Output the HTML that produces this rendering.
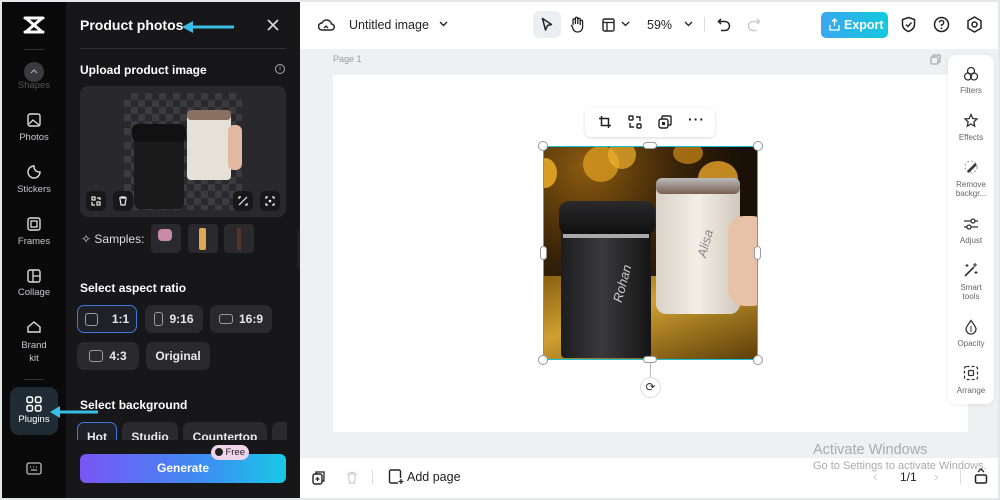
<!DOCTYPE html>
<html><head><meta charset="utf-8"><style>
*{box-sizing:border-box;margin:0;padding:0}
body{width:1000px;height:500px;overflow:hidden;background:#e6e7ea;font-family:"Liberation Sans",sans-serif;position:relative}
.a{position:absolute}
.rail{left:2px;top:2px;width:64px;height:496px;background:#0a0a0b}
.panel{left:66px;top:2px;width:234px;height:496px;background:#17171a}
.rl{color:#c8c8cc;font-size:9.5px;text-align:center;width:64px;left:2px}
.w{color:#fff}
.btn{background:#2a2a2e;border-radius:7px;color:#e8e8ea;font-size:12px;font-weight:bold;display:flex;align-items:center;justify-content:center;gap:6px}
.sq{border:1.5px solid #9a9aa0;border-radius:3px;display:inline-block}
.ri{left:948px;width:46px;text-align:center;color:#666;font-size:8px;line-height:9px}
svg{position:absolute}
</style></head><body>
<div class="a rail"></div>
<div class="a panel"></div>
<!-- logo -->
<svg style="left:22px;top:15px" width="24" height="20" viewBox="0 0 24 20"><path d="M3 3h18M3 17h18M5 4l14 12M19 4L5 16" stroke="#fff" stroke-width="3" fill="none" stroke-linecap="round"/></svg>
<div class="a" style="left:24px;top:49px;width:20px;height:1px;background:#333"></div>
<div class="a" style="left:24px;top:62px;width:20px;height:20px;border-radius:50%;background:#3a3a3e"></div>
<svg style="left:30px;top:68px" width="8" height="6"><path d="M1 5l3-3 3 3" stroke="#aaa" fill="none" stroke-width="1.2"/></svg>
<div class="a rl" style="top:80px;color:#555">Shapes</div>
<svg style="left:27px;top:113px" width="14" height="14"><rect x="1" y="1" width="12" height="12" rx="2" stroke="#ddd" fill="none" stroke-width="1.4"/><path d="M2 11l4-4 6 5" stroke="#ddd" fill="none" stroke-width="1.3"/></svg>
<div class="a rl" style="top:132px">Photos</div>
<svg style="left:27px;top:165px" width="14" height="14"><path d="M7 1a6 6 0 1 0 6 6c-4 0-6-2-6-6z" stroke="#ddd" fill="none" stroke-width="1.4"/></svg>
<div class="a rl" style="top:184px">Stickers</div>
<svg style="left:27px;top:217px" width="14" height="14"><rect x="1" y="1" width="12" height="12" rx="2" stroke="#ddd" fill="none" stroke-width="1.4"/><rect x="4" y="4" width="6" height="6" stroke="#ddd" fill="none" stroke-width="1.3"/></svg>
<div class="a rl" style="top:236px">Frames</div>
<svg style="left:27px;top:269px" width="14" height="14"><rect x="1" y="1" width="12" height="12" rx="2" stroke="#ddd" fill="none" stroke-width="1.4"/><path d="M6 1v12M6 7h7" stroke="#ddd" stroke-width="1.3"/></svg>
<div class="a rl" style="top:287px">Collage</div>
<svg style="left:26px;top:320px" width="16" height="14"><path d="M2 12h12V7L8 2 2 7z" stroke="#ddd" fill="none" stroke-width="1.4"/></svg>
<div class="a rl" style="top:339px;line-height:13px">Brand<br>kit</div>
<div class="a" style="left:24px;top:379px;width:20px;height:1px;background:#333"></div>
<div class="a" style="left:10px;top:387px;width:48px;height:48px;border-radius:9px;background:#1f2b35"></div>
<svg style="left:26px;top:396px" width="16" height="16"><g stroke="#fff" fill="none" stroke-width="1.5"><rect x="1" y="1" width="5.5" height="5.5" rx="1.5"/><rect x="9.5" y="1" width="5.5" height="5.5" rx="1.5"/><rect x="1" y="9.5" width="5.5" height="5.5" rx="1.5"/><rect x="9.5" y="9.5" width="5.5" height="5.5" rx="1.5"/></g></svg>
<div class="a rl w" style="top:414px;color:#fff">Plugins</div>
<svg style="left:48px;top:404px" width="52" height="16"><path d="M50 8H10" stroke="#3bbde8" stroke-width="3"/><path d="M2 8l10-6v12z" fill="#3bbde8"/></svg>
<svg style="left:26px;top:462px" width="16" height="14"><rect x="1" y="1" width="14" height="11" rx="2" stroke="#bbb" fill="none" stroke-width="1.3"/><path d="M4 5h1M7 5h1M10 5h1M5 8h6" stroke="#bbb" stroke-width="1.3"/></svg>

<!-- panel -->
<div class="a w" style="left:80px;top:17px;font-size:14px;font-weight:bold">Product photos</div>
<svg style="left:180px;top:19px" width="56" height="16"><path d="M54 8H12" stroke="#3bbde8" stroke-width="3"/><path d="M2 8l11-6v12z" fill="#3bbde8"/></svg>
<svg style="left:267px;top:19px" width="12" height="12"><path d="M1 1l10 10M11 1L1 11" stroke="#ddd" stroke-width="1.6"/></svg>
<div class="a" style="left:80px;top:48px;width:206px;height:1px;background:#2e2e33"></div>
<div class="a w" style="left:80px;top:63px;font-size:12px;font-weight:bold">Upload product image</div>
<div class="a" style="left:275px;top:64px;width:10px;height:10px;border-radius:50%;border:1px solid #aaa;color:#aaa;font-size:7px;text-align:center;line-height:8px">i</div>
<div class="a" style="left:80px;top:86px;width:206px;height:131px;border-radius:8px;background:#29292d"></div>
<div class="a" style="left:124px;top:93px;width:118px;height:117px;background-color:#2a2a2e;background-image:linear-gradient(45deg,#3b3b40 25%,transparent 25%,transparent 75%,#3b3b40 75%),linear-gradient(45deg,#3b3b40 25%,transparent 25%,transparent 75%,#3b3b40 75%);background-size:14px 14px;background-position:0 0,7px 7px"></div>
<div class="a" style="left:134px;top:125px;width:50px;height:84px;background:#1a1a1a;border-radius:8px 8px 6px 6px"></div>
<div class="a" style="left:132px;top:124px;width:54px;height:18px;background:#111;border-radius:6px"></div>
<div class="a" style="left:187px;top:112px;width:44px;height:68px;background:#e6e1d8;border-radius:4px"></div>
<div class="a" style="left:187px;top:110px;width:44px;height:10px;background:#8a7060;border-radius:4px"></div>
<div class="a" style="left:228px;top:125px;width:14px;height:45px;background:#e2b8a0;border-radius:6px"></div>
<div class="a" style="left:86px;top:191px;width:20px;height:20px;background:#18181b;border-radius:5px"></div>
<div class="a" style="left:113px;top:191px;width:20px;height:20px;background:#18181b;border-radius:5px"></div>
<div class="a" style="left:233px;top:191px;width:20px;height:20px;background:#18181b;border-radius:5px"></div>
<div class="a" style="left:260px;top:191px;width:20px;height:20px;background:#18181b;border-radius:5px"></div>
<svg style="left:91px;top:196px" width="10" height="10"><g stroke="#eee" fill="none" stroke-width="1.2"><rect x="1" y="1" width="3" height="3"/><rect x="6" y="6" width="3" height="3"/><path d="M6 2h3v2M1 6v3h3"/></g></svg>
<svg style="left:118px;top:196px" width="10" height="10"><path d="M1 2h8M3 2V1h4v1M2 3l1 6h4l1-6" stroke="#eee" fill="none" stroke-width="1.2"/></svg>
<svg style="left:238px;top:196px" width="10" height="10"><path d="M1 9l8-8M1 3V1h2M9 7v2H7" stroke="#eee" fill="none" stroke-width="1.2"/></svg>
<svg style="left:265px;top:196px" width="10" height="10"><path d="M1 3V1h2M7 1h2v2M9 7v2H7M3 9H1V7" stroke="#eee" fill="none" stroke-width="1.2"/><circle cx="5" cy="5" r="1.3" fill="#eee"/></svg>
<div class="a" style="left:81px;top:232px;color:#ccc;font-size:12px">✧ <span style="color:#ddd">Samples:</span></div>
<div class="a" style="left:151px;top:224px;width:30px;height:29px;background:#2a2a2e;border-radius:4px"></div>
<div class="a" style="left:158px;top:229px;width:14px;height:12px;background:#c98aa8;border-radius:4px"></div>
<div class="a" style="left:188px;top:224px;width:30px;height:29px;background:#2a2a2e;border-radius:4px"></div>
<div class="a" style="left:199px;top:228px;width:7px;height:22px;background:#d9a955;border-radius:2px"></div>
<div class="a" style="left:224px;top:224px;width:30px;height:29px;background:#2a2a2e;border-radius:4px"></div>
<div class="a" style="left:237px;top:228px;width:4px;height:22px;background:#5a3328"></div>
<div class="a w" style="left:80px;top:281px;font-size:12px;font-weight:bold">Select aspect ratio</div>
<div class="a btn" style="left:77px;top:305px;width:60px;height:28px;border:1.5px solid #3d78d8;background:#202028"><span class="sq" style="width:13px;height:13px"></span><span style="margin-left:8px">1:1</span></div>
<div class="a btn" style="left:145px;top:305px;width:58px;height:28px"><span class="sq" style="width:9px;height:14px"></span>9:16</div>
<div class="a btn" style="left:210px;top:305px;width:62px;height:28px"><span class="sq" style="width:14px;height:10px"></span>16:9</div>
<div class="a btn" style="left:77px;top:342px;width:62px;height:28px"><span class="sq" style="width:14px;height:12px"></span>4:3</div>
<div class="a btn" style="left:146px;top:342px;width:64px;height:28px">Original</div>
<div class="a w" style="left:80px;top:398px;font-size:12px;font-weight:bold">Select background</div>
<div class="a" style="left:77px;top:420px;width:210px;height:20px;overflow:hidden">
<div class="a btn" style="left:0;top:2px;width:40px;height:28px;border:1.5px solid #3d78d8;background:#202028;align-items:flex-start;padding-top:7px">Hot</div>
<div class="a btn" style="left:45px;top:2px;width:56px;height:28px;align-items:flex-start;padding-top:8px">Studio</div>
<div class="a btn" style="left:106px;top:2px;width:84px;height:28px;align-items:flex-start;padding-top:8px">Countertop</div>
<div class="a btn" style="left:195px;top:2px;width:40px;height:28px"></div>
</div>
<div class="a" style="left:80px;top:454px;width:206px;height:29px;border-radius:6px;background:linear-gradient(90deg,#7a55f5,#3d8ef2 60%,#18c8e6);color:#fff;font-size:12px;font-weight:bold;text-align:center;line-height:29px">Generate</div>
<div class="a" style="left:211px;top:445px;width:38px;height:15px;border-radius:8px;background:#f0d4ec;color:#222;font-size:9.5px;line-height:15px;text-align:right;padding-right:4px"><span style="position:absolute;left:4px;top:3px;width:8px;height:8px;border-radius:50%;background:#222"></span>Free</div>
<div class="a" style="left:297px;top:230px;width:6px;height:40px;background:#222;border-radius:3px"></div>

<!-- topbar -->
<div class="a" style="left:300px;top:2px;width:698px;height:47px;background:#fff"></div>
<svg style="left:318px;top:17px" width="17" height="15"><path d="M4 13a3.5 3.5 0 0 1 0-7 5 5 0 0 1 9.5 1A3 3 0 0 1 13 13z" stroke="#222" fill="none" stroke-width="1.5"/><path d="M6 11l2-2 2 2" stroke="#222" fill="none" stroke-width="1.3"/></svg>
<div class="a" style="left:349px;top:18px;font-size:12.5px;color:#222">Untitled image</div>
<svg style="left:439px;top:21px" width="9" height="6"><path d="M1 1l3.5 3.5L8 1" stroke="#222" fill="none" stroke-width="1.4"/></svg>
<div class="a" style="left:533px;top:11px;width:28px;height:27px;border-radius:6px;background:#eceef1"></div>
<svg style="left:541px;top:17px" width="12" height="15"><path d="M1.5 1.5l9 6-4 1-2 4.5z" stroke="#222" fill="none" stroke-width="1.5" stroke-linejoin="round"/></svg>
<svg style="left:569px;top:16px" width="15" height="17"><path d="M4 9V4a1.2 1.2 0 0 1 2.4 0v4V2.5a1.2 1.2 0 0 1 2.4 0V8 3.5a1.2 1.2 0 0 1 2.4 0V9 5.5a1.2 1.2 0 0 1 2.4 0V11a5 5 0 0 1-10 0L2 9" stroke="#222" fill="none" stroke-width="1.3"/></svg>
<svg style="left:602px;top:18px" width="13" height="14"><rect x="1" y="1" width="11" height="12" rx="1.5" stroke="#222" fill="none" stroke-width="1.4"/><path d="M1 4.5h11M5 4.5V13" stroke="#222" stroke-width="1.3"/></svg>
<svg style="left:621px;top:21px" width="9" height="6"><path d="M1 1l3.5 3.5L8 1" stroke="#222" fill="none" stroke-width="1.3"/></svg>
<div class="a" style="left:647px;top:18px;font-size:12.5px;color:#222">59%</div>
<svg style="left:684px;top:21px" width="9" height="6"><path d="M1 1l3.5 3.5L8 1" stroke="#222" fill="none" stroke-width="1.3"/></svg>
<div class="a" style="left:704px;top:17px;width:1px;height:15px;background:#ddd"></div>
<svg style="left:717px;top:17px" width="14" height="15"><path d="M4 2L1.5 4.5 4 7M1.5 4.5H8a4.5 4.5 0 0 1 0 9H4" stroke="#222" fill="none" stroke-width="1.5"/></svg>
<svg style="left:747px;top:17px" width="14" height="15"><path d="M10 2l2.5 2.5L10 7M12.5 4.5H6a4.5 4.5 0 0 0 0 9h4" stroke="#ccc" fill="none" stroke-width="1.5"/></svg>
<div class="a" style="left:821px;top:12px;width:67px;height:26px;border-radius:5px;background:linear-gradient(90deg,#3aa7f0,#12c9dc);color:#fff;font-size:12.5px;font-weight:bold;line-height:26px;padding-left:23px">Export</div>
<svg style="left:829px;top:18px" width="11" height="13"><path d="M5.5 8V1M3 3.5l2.5-2.5L8 3.5M1 7v5h9V7" stroke="#fff" fill="none" stroke-width="1.3"/></svg>
<svg style="left:901px;top:16px" width="15" height="17"><path d="M7.5 1.5l6 2v5c0 3.5-3 6-6 7-3-1-6-3.5-6-7v-5z" stroke="#222" fill="none" stroke-width="1.5"/><path d="M5 8.5l2 2 3.5-4" stroke="#222" fill="none" stroke-width="1.4"/></svg>
<svg style="left:933px;top:16px" width="17" height="17"><circle cx="8.5" cy="8.5" r="7" stroke="#222" fill="none" stroke-width="1.5"/><path d="M6.3 6.5a2.2 2.2 0 1 1 2.2 2.3V10" stroke="#222" fill="none" stroke-width="1.4"/><circle cx="8.5" cy="12.3" r=".9" fill="#222"/></svg>
<svg style="left:966px;top:16px" width="17" height="17"><path d="M8.5 1l6.5 3.75v7.5L8.5 16 2 12.25v-7.5z" stroke="#222" fill="none" stroke-width="1.5"/><circle cx="8.5" cy="8.5" r="2.5" stroke="#222" fill="none" stroke-width="1.5"/></svg>

<!-- canvas -->
<div class="a" style="left:300px;top:49px;width:698px;height:409px;background:#eef0f3"></div>
<div class="a" style="left:333px;top:54px;font-size:9px;color:#999">Page 1</div>
<svg style="left:930px;top:54px" width="11" height="11"><rect x="1" y="3" width="7" height="7" rx="1" stroke="#999" fill="none"/><path d="M3 3V1h7v7H8" stroke="#999" fill="none"/></svg>
<div class="a" style="left:333px;top:75px;width:635px;height:357px;background:#fff"></div>
<!-- photo -->
<div class="a" style="left:543px;top:146px;width:215px;height:214px;overflow:hidden;background:radial-gradient(circle at 20% 10%,#8a5a10 0,#3a2408 35%,#1a1006 60%);">
<div class="a" style="left:40px;top:0;width:36px;height:36px;border-radius:50%;background:#d99a20;opacity:.8"></div>
<div class="a" style="left:65px;top:-5px;width:28px;height:28px;border-radius:50%;background:#f0b030;opacity:.7"></div>
<div class="a" style="left:-10px;top:12px;width:24px;height:30px;border-radius:50%;background:#f4b428;opacity:.8"></div>
<div class="a" style="left:155px;top:15px;width:40px;height:35px;border-radius:50%;background:#e9a52a;opacity:.8"></div>
<div class="a" style="left:130px;top:-4px;width:30px;height:22px;border-radius:50%;background:#d08a18;opacity:.7"></div>
<div class="a" style="left:0;top:130px;width:215px;height:84px;background:linear-gradient(160deg,#8a6010,#d0a030 40%,#5a3c08)"></div>
<div class="a" style="left:18px;top:62px;width:90px;height:150px;background:linear-gradient(90deg,#1d1d1f,#3a3a3c 45%,#151516);border-radius:8px 8px 4px 4px"></div>
<div class="a" style="left:16px;top:55px;width:96px;height:34px;background:linear-gradient(#2a2a2c,#0f0f10);border-radius:10px"></div>
<div class="a" style="left:20px;top:88px;width:86px;height:4px;background:#aaa"></div>
<div class="a" style="left:60px;top:130px;font-size:13px;color:#ccc;font-style:italic;transform:rotate(-75deg)">Rohan</div>
<div class="a" style="left:113px;top:38px;width:84px;height:130px;background:linear-gradient(90deg,#d8d2c8,#f2eee6 50%,#d0c8bc);border-radius:4px 4px 10px 10px"></div>
<div class="a" style="left:113px;top:32px;width:84px;height:16px;background:linear-gradient(#bbb,#7a6050);border-radius:6px"></div>
<div class="a" style="left:148px;top:90px;font-size:13px;color:#888;font-style:italic;transform:rotate(-75deg)">Alisa</div>
<div class="a" style="left:185px;top:70px;width:40px;height:90px;background:#e8c2a8;border-radius:16px"></div>
</div>
<div class="a" style="left:543px;top:146px;width:215px;height:214px;border:1.5px solid #14c2d8"></div>
<div class="a" style="left:538px;top:141px;width:10px;height:10px;border-radius:50%;background:#fff;border:1px solid #999"></div>
<div class="a" style="left:753px;top:141px;width:10px;height:10px;border-radius:50%;background:#fff;border:1px solid #999"></div>
<div class="a" style="left:538px;top:355px;width:10px;height:10px;border-radius:50%;background:#fff;border:1px solid #999"></div>
<div class="a" style="left:753px;top:355px;width:10px;height:10px;border-radius:50%;background:#fff;border:1px solid #999"></div>
<div class="a" style="left:643px;top:142px;width:14px;height:7px;border-radius:4px;background:#fff;border:1px solid #999"></div>
<div class="a" style="left:643px;top:356px;width:14px;height:7px;border-radius:4px;background:#fff;border:1px solid #999"></div>
<div class="a" style="left:540px;top:246px;width:7px;height:14px;border-radius:4px;background:#fff;border:1px solid #999"></div>
<div class="a" style="left:754px;top:246px;width:7px;height:14px;border-radius:4px;background:#fff;border:1px solid #999"></div>
<div class="a" style="left:650px;top:363px;width:1px;height:14px;background:#bbb"></div>
<div class="a" style="left:640px;top:377px;width:21px;height:21px;border-radius:50%;background:#fff;border:1px solid #ddd;text-align:center;font-size:12px;line-height:19px;color:#333">⟳</div>
<div class="a" style="left:585px;top:108px;width:130px;height:29px;border-radius:6px;background:#fff;box-shadow:0 1px 3px rgba(0,0,0,.15)"></div>
<svg style="left:598px;top:115px" width="14" height="14"><path d="M3.5 1v9.5H13M1 3.5h9.5V13" stroke="#222" fill="none" stroke-width="1.5"/></svg>
<svg style="left:628px;top:115px" width="14" height="14"><g stroke="#222" fill="none" stroke-width="1.4"><rect x="1" y="1" width="4" height="4" rx="1"/><rect x="9" y="9" width="4" height="4" rx="1"/><path d="M8 2h4v4M2 8v4h4"/></g></svg>
<svg style="left:658px;top:115px" width="14" height="14"><rect x="1" y="4" width="9" height="9" rx="2" stroke="#222" fill="none" stroke-width="1.4"/><path d="M4 4V2a1 1 0 0 1 1-1h7a1 1 0 0 1 1 1v7a1 1 0 0 1-1 1h-2" stroke="#222" fill="none" stroke-width="1.4"/><rect x="4" y="7" width="3" height="3" fill="#222"/></svg>
<div class="a" style="left:688px;top:111px;font-size:14px;color:#222;font-weight:bold;letter-spacing:1px">···</div>

<!-- right tools -->
<div class="a" style="left:948px;top:55px;width:46px;height:349px;background:#fff;border-radius:8px;box-shadow:0 1px 4px rgba(0,0,0,.08)"></div>
<svg style="left:963px;top:66px" width="16" height="16"><g stroke="#333" fill="none" stroke-width="1.3"><circle cx="8" cy="5" r="3.5"/><circle cx="5" cy="10.5" r="3.5"/><circle cx="11" cy="10.5" r="3.5"/></g></svg>
<div class="a ri" style="top:86px">Filters</div>
<svg style="left:963px;top:113px" width="16" height="16"><path d="M8 1.5l1.8 4 4.2.5-3.1 2.9.8 4.3L8 11l-3.7 2.2.8-4.3L2 6l4.2-.5z" stroke="#333" fill="none" stroke-width="1.3"/></svg>
<div class="a ri" style="top:133px">Effects</div>
<svg style="left:963px;top:159px" width="16" height="16"><circle cx="8" cy="8" r="6" stroke="#999" fill="none" stroke-dasharray="2 2"/><path d="M5 12l7-7 1 1-7 7z" stroke="#333" fill="none" stroke-width="1.3"/></svg>
<div class="a ri" style="top:180px">Remove<br>backgr...</div>
<svg style="left:963px;top:216px" width="16" height="16"><path d="M1 5h14M1 11h14" stroke="#333" stroke-width="1.3"/><circle cx="10" cy="5" r="2" fill="#fff" stroke="#333" stroke-width="1.3"/><circle cx="6" cy="11" r="2" fill="#fff" stroke="#333" stroke-width="1.3"/></svg>
<div class="a ri" style="top:236px">Adjust</div>
<svg style="left:963px;top:262px" width="16" height="16"><path d="M2 14l9-9" stroke="#333" stroke-width="1.6"/><path d="M12 1v4M10 3h4M4 2v3M2.5 3.5h3M13 9v3M11.5 10.5h3" stroke="#333" stroke-width="1.1"/></svg>
<div class="a ri" style="top:283px">Smart<br>tools</div>
<svg style="left:964px;top:319px" width="14" height="16"><path d="M7 1.5C4 5.5 2 8 2 10a5 5 0 0 0 10 0c0-2-2-4.5-5-8.5z" stroke="#333" fill="none" stroke-width="1.3"/><path d="M7 7v6" stroke="#333" stroke-width="1"/></svg>
<div class="a ri" style="top:339px">Opacity</div>
<svg style="left:963px;top:365px" width="16" height="16"><rect x="1.5" y="1.5" width="13" height="13" rx="2" stroke="#333" fill="none" stroke-width="1.3" stroke-dasharray="3 2"/><rect x="5.5" y="5.5" width="5" height="5" rx="1" stroke="#333" fill="none" stroke-width="1.3"/></svg>
<div class="a ri" style="top:386px">Arrange</div>

<!-- bottom bar -->
<div class="a" style="left:300px;top:458px;width:698px;height:40px;background:#fff"></div>
<svg style="left:312px;top:470px" width="14" height="15"><rect x="1" y="4" width="9" height="10" rx="2" stroke="#222" fill="none" stroke-width="1.4"/><path d="M4 4V2h8v9h-2" stroke="#222" fill="none" stroke-width="1.3"/><path d="M5.5 7v4M3.5 9h4" stroke="#222" stroke-width="1.2"/></svg>
<svg style="left:346px;top:471px" width="12" height="13"><path d="M1 3h10M4 3V1.5h4V3M2.5 4l1 8h5l1-8" stroke="#ccc" fill="none" stroke-width="1.2"/></svg>
<div class="a" style="left:372px;top:470px;width:1px;height:14px;background:#ddd"></div>
<svg style="left:388px;top:469px" width="16" height="16"><path d="M10 14H3a1.5 1.5 0 0 1-1.5-1.5v-10A1.5 1.5 0 0 1 3 1h8a1.5 1.5 0 0 1 1.5 1.5V9" stroke="#222" fill="none" stroke-width="1.4"/><path d="M13 10v5M10.5 12.5h5" stroke="#222" stroke-width="1.3"/></svg>
<div class="a" style="left:407px;top:470px;font-size:12.5px;color:#222">Add page</div>
<div class="a" style="left:813px;top:442px;font-size:14.5px;color:#aaa">Activate Windows</div>
<div class="a" style="left:813px;top:460px;font-size:11px;color:#aaa">Go to Settings to activate Windows.</div>
<div class="a" style="left:873px;top:469px;font-size:13px;color:#ccc">‹</div>
<div class="a" style="left:900px;top:470px;font-size:12px;color:#222">1/1</div>
<div class="a" style="left:934px;top:469px;font-size:13px;color:#ccc">›</div>
<div class="a" style="left:960px;top:470px;width:1px;height:14px;background:#ddd"></div>
<svg style="left:974px;top:468px" width="14" height="16"><path d="M4 4l3-3 3 3" stroke="#222" fill="none" stroke-width="1.3"/><rect x="1.5" y="7" width="11" height="8" rx="1.5" stroke="#222" fill="none" stroke-width="1.5"/></svg>
</body></html>
